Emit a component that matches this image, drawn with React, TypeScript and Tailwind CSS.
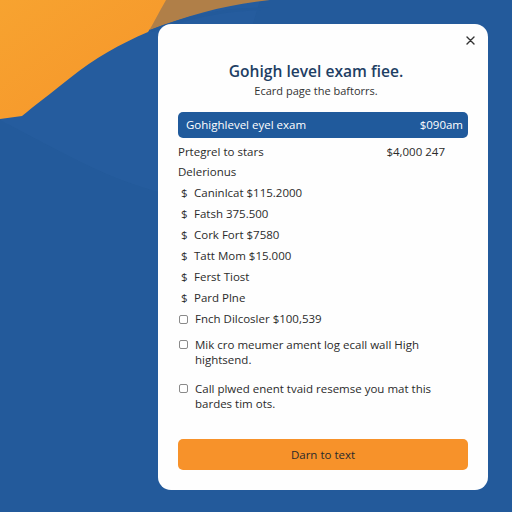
import React from "react";

const dollarRows = [
  "Caninlcat $115.2000",
  "Fatsh 375.500",
  "Cork Fort $7580",
  "Tatt Mom $15.000",
  "Ferst Tiost",
  "Pard Plne",
];

function Checkbox() {
  return <div className="w-[9px] h-[9px] border border-[#8a8a8a] rounded-[2px] bg-white shrink-0" />;
}

export default function App() {
  return (
    <div
      className="relative w-[512px] h-[512px] overflow-hidden bg-[#235a9b]"
      style={{ fontFamily: '"Open Sans", "Noto Sans", sans-serif' }}
    >
      <svg className="absolute inset-0" width="512" height="512" viewBox="0 0 512 512">
        <defs>
          <linearGradient id="og" x1="0" y1="0" x2="1" y2="1">
            <stop offset="0" stopColor="#f7a330" />
            <stop offset="1" stopColor="#f6952a" />
          </linearGradient>
        </defs>
        <path d="M0,120 C60,150 120,190 200,200 L260,0 L0,0 Z" fill="#2a62a2" opacity="0.35" />
        <path d="M145,0 L270,0 C230,4 190,14 150,30 Z" fill="#b07f48" />
        <path d="M150,30 C190,14 230,6 270,8 L270,10 C230,10 190,18 152,32 Z" fill="#235a9b" />
        <path d="M0,0 L166,0 C158,14 152,26 148,32 C120,44 95,58 70,78 C50,94 34,106 22,116 L0,119 Z" fill="url(#og)" />
      </svg>

      <div className="relative pl-[158px] pt-[24px]">
        <div className="relative w-[330px] h-[466px] bg-[#fefefe] rounded-[13px] px-5 flex flex-col">
          <svg className="absolute right-[13px] top-[12px]" width="9" height="9" viewBox="0 0 9 9">
            <path d="M1 1 L8 8 M8 1 L1 8" stroke="#333" strokeWidth="1.4" strokeLinecap="round" />
          </svg>

          <div className="mt-[35px] mr-[14px] text-center text-[15.6px] leading-[24px] font-semibold text-[#1e3f64]">
            Gohigh level exam fiee.
          </div>
          <div className="mr-[14px] text-center text-[11px] leading-[16px] text-[#333]">Ecard page the baftorrs.</div>

          <div className="mt-[13px] h-[26px] rounded-[5px] bg-[#205a9c] flex items-center justify-between pl-2 pr-[5px] text-white text-[11.5px] font-medium">
            <span>Gohighlevel eyel exam</span>
            <span>$090am</span>
          </div>

          <div className="mt-[4px] h-[20px] flex items-center text-[11.5px] text-[#2b2b2b]">
            <span>Prtegrel to stars</span>
            <span className="ml-auto mr-[23px]">$4,000 247</span>
          </div>
          <div className="h-[20px] flex items-center text-[11.5px] text-[#2b2b2b]">Delerionus</div>

          {dollarRows.map((r) => (
            <div key={r} className="h-[21px] flex items-center text-[11.5px] text-[#2b2b2b]">
              <span className="w-[16px] pl-[3px]">$</span>
              <span>{r}</span>
            </div>
          ))}

          <div className="h-[22px] flex items-center gap-[7px] text-[11.5px] text-[#2b2b2b] pl-[1px]">
            <Checkbox />
            <span>Fnch Dilcosler $100,539</span>
          </div>

          <div className="mt-[7px] flex items-start gap-[7px] text-[11.5px] leading-[15px] text-[#2b2b2b] pl-[1px]">
            <div className="mt-[3px]">
              <Checkbox />
            </div>
            <span className="w-[250px]">Mik cro meumer ament log ecall wall High hightsend.</span>
          </div>

          <div className="mt-[14px] flex items-start gap-[7px] text-[11.5px] leading-[15px] text-[#2b2b2b] pl-[1px]">
            <div className="mt-[3px]">
              <Checkbox />
            </div>
            <span className="w-[250px]">Call plwed enent tvaid resemse you mat this bardes tim ots.</span>
          </div>

          <div className="mt-[28px] h-[31px] rounded-[5px] bg-[#f7922a] flex items-center justify-center text-[11.5px] font-medium text-[#2a2a2a]">
            Darn to text
          </div>
        </div>
      </div>
    </div>
  );
}
